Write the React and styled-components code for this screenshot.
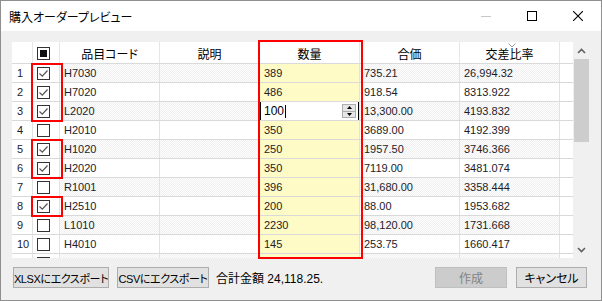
import React from 'react';
import styled, { createGlobalStyle } from 'styled-components';

const GlobalStyle = createGlobalStyle`
  body {
    margin: 0;
    background: #f0f0f0;
  }
  * {
    box-sizing: border-box;
  }
`;

const COLS = '21px 27px 100px 100px 100px 100px 100px 13px';
const JP = '"Liberation Sans", "Noto Sans CJK JP", sans-serif';

const rows = [
  { no: 1, checked: true, code: 'H7030', qty: '389', price: '735.21', ratio: '26,994.32' },
  { no: 2, checked: true, code: 'H7020', qty: '486', price: '918.54', ratio: '8313.922' },
  { no: 3, checked: true, code: 'L2020', qty: '100', price: '13,300.00', ratio: '4193.832', editing: true },
  { no: 4, checked: false, code: 'H2010', qty: '350', price: '3689.00', ratio: '4192.399' },
  { no: 5, checked: true, code: 'H1020', qty: '250', price: '1957.50', ratio: '3746.366' },
  { no: 6, checked: true, code: 'H2020', qty: '350', price: '7119.00', ratio: '3481.074' },
  { no: 7, checked: false, code: 'R1001', qty: '396', price: '31,680.00', ratio: '3358.444' },
  { no: 8, checked: true, code: 'H2510', qty: '200', price: '88.00', ratio: '1953.682' },
  { no: 9, checked: false, code: 'L1010', qty: '2230', price: '98,120.00', ratio: '1731.668' },
  { no: 10, checked: false, code: 'H4010', qty: '145', price: '253.75', ratio: '1660.417' },
  { no: '', checked: false, code: '', qty: '', price: '', ratio: '' },
];

// red annotation frames, in px relative to the grid frame
const marks = [
  { left: 19, top: 21, width: 32, height: 59 },
  { left: 19, top: 97, width: 32, height: 40 },
  { left: 19, top: 154, width: 32, height: 21 },
  { left: 246, top: -2, width: 105, height: 219 },
];

const Window = styled.div`
  width: 602px;
  height: 301px;
  border: 1px solid #8f8f8f;
  background: #f0f0f0;
  display: flex;
  flex-direction: column;
  font-family: ${JP};
  font-feature-settings: "palt";
  color: #000;
`;

const TitleBar = styled.div`
  height: 30px;
  background: #fff;
  display: flex;
  align-items: center;
  padding-left: 8px;
`;

const Title = styled.div`
  flex: 1;
  font-size: 12px;
`;

const WinButton = styled.div`
  width: 46px;
  height: 30px;
  display: flex;
  align-items: center;
  justify-content: center;
`;

const Body = styled.div`
  flex: 1;
  padding: 11px 11px 0 11px;
  display: flex;
  flex-direction: column;
`;

const GridFrame = styled.div`
  position: relative;
  height: 216px;
  display: flex;
`;

const Table = styled.div`
  flex: 1;
  background: #fff;
  overflow: hidden;
`;

const HeaderRow = styled.div`
  display: grid;
  grid-template-columns: ${COLS};
  height: 22px;
  border-bottom: 1px solid #dadada;
`;

const HeaderCell = styled.div`
  position: relative;
  display: flex;
  align-items: center;
  justify-content: ${(p) => (p.$left ? 'flex-start' : 'center')};
  padding-left: ${(p) => (p.$left ? '4px' : '0')};
  border-right: ${(p) => (p.$last ? 'none' : '1px solid #e6e6e6')};
  font-size: 12px;
  padding-top: 1px;
`;

const SortGlyph = styled.svg`
  position: absolute;
  top: 1px;
  left: 48px;
`;

const Row = styled.div`
  display: grid;
  grid-template-columns: ${COLS};
  height: 19px;
  border-bottom: 1px solid #d9d9d9;
`;

const dither = 'repeating-conic-gradient(#efefef 0 25%, #ffffff 0 50%) 0 0 / 2px 2px';

const Cell = styled.div`
  display: flex;
  align-items: center;
  padding-left: ${(p) => (p.$pad ? `${p.$pad}px` : '4px')};
  border-right: ${(p) => (p.$last ? 'none' : '1px solid #e2e2e2')};
  font-family: "Liberation Sans", sans-serif;
  font-size: 11px;
  color: #1c1c28;
  background: ${(p) => (p.$qty ? '#fffbc6' : p.$alt ? dither : '#fff')};
  white-space: nowrap;
  overflow: hidden;
`;

const Box = styled.div`
  width: 13px;
  height: 13px;
  border: 1px solid #333;
  background: #fff;
  display: flex;
  align-items: center;
  justify-content: center;
`;

const Fill = styled.div`
  width: 7px;
  height: 7px;
  background: #111;
`;

const Editor = styled.div`
  flex: 1;
  align-self: stretch;
  margin: -1px 0 -1px -4px;
  border: 1px solid #000;
  background: #fff;
  display: flex;
  align-items: center;
  padding-left: 3px;
  font-size: 12px;
  color: #000;
`;

const Caret = styled.span`
  display: inline-block;
  width: 1px;
  height: 13px;
  background: #000;
  margin-left: 1px;
`;

const Spinner = styled.div`
  margin-left: auto;
  margin-right: 2px;
  width: 14px;
  height: 14px;
  display: flex;
  flex-direction: column;
  border: 1px solid #adadad;
  background: #e6e6e6;
`;

const SpinHalf = styled.div`
  flex: 1;
  display: flex;
  align-items: center;
  justify-content: center;
  border-top: ${(p) => (p.$down ? '1px solid #adadad' : 'none')};
`;

const Scrollbar = styled.div`
  width: 17px;
  background: #f0f0f0;
  display: flex;
  flex-direction: column;
`;

const ScrollArrow = styled.div`
  height: 17px;
  display: flex;
  align-items: center;
  justify-content: center;
`;

const Track = styled.div`
  flex: 1;
  display: flex;
  flex-direction: column;
`;

const Thumb = styled.div`
  height: 83px;
  margin: 0 1px;
  background: #cdcdcd;
`;

const Mark = styled.div`
  position: absolute;
  border: 2px solid #f00;
  pointer-events: none;
`;

const Footer = styled.div`
  margin-top: 9px;
  display: flex;
  align-items: center;
  padding: 0 3px 0 1px;
`;

const Button = styled.div`
  flex-shrink: 0;
  width: ${(p) => p.$w}px;
  height: 21px;
  margin-right: ${(p) => (p.$gap ? `${p.$gap}px` : '0')};
  border: 1px solid ${(p) => (p.$disabled ? '#bfbfbf' : '#adadad')};
  background: ${(p) => (p.$disabled ? '#cccccc' : '#e1e1e1')};
  color: ${(p) => (p.$disabled ? '#838383' : '#000')};
  display: flex;
  align-items: center;
  justify-content: center;
  font-size: ${(p) => (p.$small ? '11px' : '12px')};
  letter-spacing: ${(p) => (p.$small ? '-0.4px' : '0')};
  white-space: nowrap;
  overflow: hidden;
`;

const Total = styled.div`
  flex: 1;
  font-size: 12px;
  white-space: nowrap;
`;

const Check = () => (
  <svg width="11" height="11" viewBox="0 0 11 11">
    <polyline points="1.5,5.5 4.3,8.2 9.5,2.5" fill="none" stroke="#555" strokeWidth="1.2" />
  </svg>
);

const Checkbox = ({ checked }) => <Box>{checked && <Check />}</Box>;

export default function App() {
  return (
    <>
      <GlobalStyle />
      <Window>
        <TitleBar>
          <Title>購入オーダープレビュー</Title>
          <WinButton>
            <svg width="10" height="10" viewBox="0 0 10 10">
              <line x1="0" y1="5.5" x2="10" y2="5.5" stroke="#c8c8c8" strokeWidth="1" />
            </svg>
          </WinButton>
          <WinButton>
            <svg width="10" height="10" viewBox="0 0 10 10">
              <rect x="0.5" y="0.5" width="9" height="9" fill="none" stroke="#000" strokeWidth="1" />
            </svg>
          </WinButton>
          <WinButton>
            <svg width="10" height="10" viewBox="0 0 10 10">
              <path d="M0 0 L10 10 M10 0 L0 10" stroke="#000" strokeWidth="1.1" />
            </svg>
          </WinButton>
        </TitleBar>
        <Body>
          <GridFrame>
            <Table>
              <HeaderRow>
                <HeaderCell />
                <HeaderCell $left>
                  <Box>
                    <Fill />
                  </Box>
                </HeaderCell>
                <HeaderCell>品目コード</HeaderCell>
                <HeaderCell>説明</HeaderCell>
                <HeaderCell>数量</HeaderCell>
                <HeaderCell>合価</HeaderCell>
                <HeaderCell>
                  <SortGlyph width="8" height="5" viewBox="0 0 8 5">
                    <polyline points="0.5,0.5 4,4 7.5,0.5" fill="none" stroke="#9a9a9a" strokeWidth="1" />
                  </SortGlyph>
                  交差比率
                </HeaderCell>
                <HeaderCell $last />
              </HeaderRow>
              {rows.map((r, i) => {
                const alt = i % 2 === 0;
                return (
                  <Row key={i}>
                    <Cell $pad={5}>{r.no}</Cell>
                    <Cell>
                      <Checkbox checked={r.checked} />
                    </Cell>
                    <Cell $alt={alt}>{r.code}</Cell>
                    <Cell $alt={alt} />
                    <Cell $qty>
                      {r.editing ? (
                        <Editor>
                          {r.qty}
                          <Caret />
                          <Spinner>
                            <SpinHalf>
                              <svg width="5" height="3" viewBox="0 0 5 3">
                                <polygon points="0,3 5,3 2.5,0" fill="#000" />
                              </svg>
                            </SpinHalf>
                            <SpinHalf $down>
                              <svg width="5" height="3" viewBox="0 0 5 3">
                                <polygon points="0,0 5,0 2.5,3" fill="#000" />
                              </svg>
                            </SpinHalf>
                          </Spinner>
                        </Editor>
                      ) : (
                        r.qty
                      )}
                    </Cell>
                    <Cell $alt={alt}>{r.price}</Cell>
                    <Cell $alt={alt}>{r.ratio}</Cell>
                    <Cell $last />
                  </Row>
                );
              })}
            </Table>
            <Scrollbar>
              <ScrollArrow>
                <svg width="9" height="6" viewBox="0 0 9 6">
                  <polyline points="1,5 4.5,1.5 8,5" fill="none" stroke="#606060" strokeWidth="1.6" />
                </svg>
              </ScrollArrow>
              <Track>
                <Thumb />
              </Track>
              <ScrollArrow>
                <svg width="9" height="6" viewBox="0 0 9 6">
                  <polyline points="1,1 4.5,4.5 8,1" fill="none" stroke="#606060" strokeWidth="1.6" />
                </svg>
              </ScrollArrow>
            </Scrollbar>
            {marks.map((m, i) => (
              <Mark
                key={i}
                style={{ left: m.left, top: m.top, width: m.width, height: m.height }}
              />
            ))}
          </GridFrame>
          <Footer>
            <Button $w={96} $gap={8} $small>XLSXにエクスポート</Button>
            <Button $w={92} $gap={7} $small>CSVにエクスポート</Button>
            <Total>合計金額 24,118.25.</Total>
            <Button $w={72} $gap={9} $disabled>作成</Button>
            <Button $w={71}>キャンセル</Button>
          </Footer>
        </Body>
      </Window>
    </>
  );
}
